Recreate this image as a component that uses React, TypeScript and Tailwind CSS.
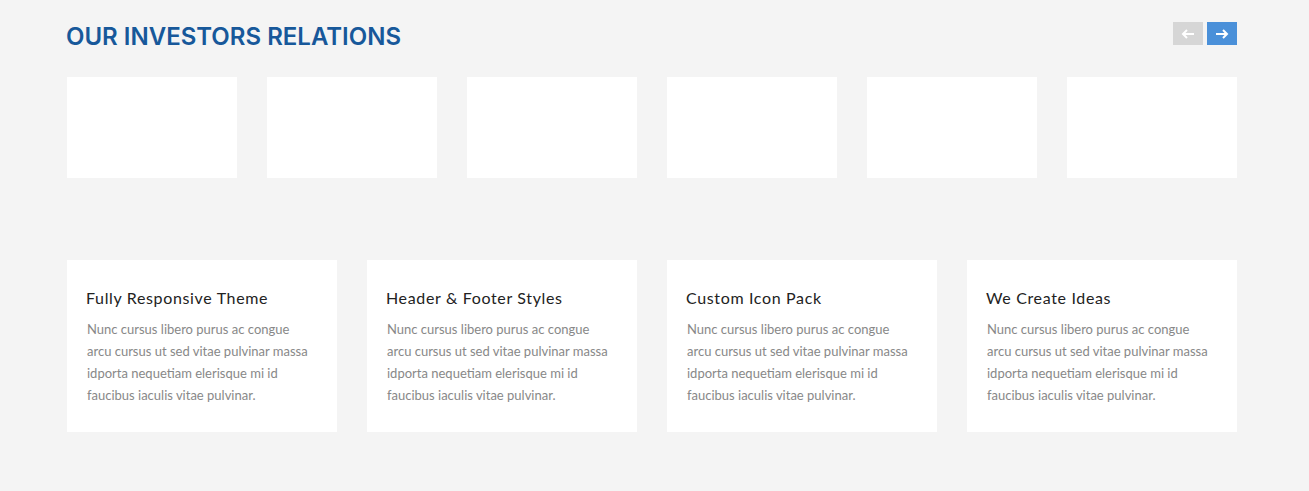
import React from "react";

const cards = [
  "Fully Responsive Theme",
  "Header & Footer Styles",
  "Custom Icon Pack",
  "We Create Ideas",
];

export default function App() {
  return (
    <div className="min-h-[491px] w-full bg-[#f4f4f4]" style={{ fontFamily: "Lato, 'Liberation Sans', sans-serif" }}>
      <div className="ml-[67px] w-[1170px] pt-[22px]">
        <div className="flex items-start justify-between">
          <h2
            className="-ml-[1px] text-[24px] font-semibold leading-[30px] tracking-[0px] text-[#17589a]"
            style={{ fontFamily: "Inter, 'Liberation Sans', sans-serif" }}
          >
            OUR INVESTORS RELATIONS
          </h2>
          <div className="flex gap-[4px]">
            <button className="flex h-[23px] w-[30px] items-center justify-center bg-[#d6d6d6]">
              <svg width="14" height="10" viewBox="0 0 14 10" fill="none" stroke="white" strokeWidth="2">
                <path d="M13 5H2M6 1L2 5l4 4" />
              </svg>
            </button>
            <button className="flex h-[23px] w-[30px] items-center justify-center bg-[#4a90d9]">
              <svg width="14" height="10" viewBox="0 0 14 10" fill="none" stroke="white" strokeWidth="2">
                <path d="M1 5h11M8 1l4 4-4 4" />
              </svg>
            </button>
          </div>
        </div>
        <div className="mt-[25px] grid grid-cols-6 gap-[30px]">
          {Array.from({ length: 6 }).map((_, i) => (
            <div key={i} className="h-[101px] bg-white" />
          ))}
        </div>
        <div className="mt-[82px] grid grid-cols-4 gap-[30px]">
          {cards.map((t) => (
            <div key={t} className="h-[172px] bg-white px-[20px] pt-[27px]">
              <h3 className="-ml-[1px] text-[16px] leading-[22px] tracking-[0.65px] text-[#222]">{t}</h3>
              <p className="mt-[9px] text-[13px] leading-[22px] text-[#888]">
                Nunc cursus libero purus ac congue arcu cursus ut sed vitae pulvinar massa idporta nequetiam elerisque mi id faucibus iaculis vitae pulvinar.
              </p>
            </div>
          ))}
        </div>
      </div>
    </div>
  );
}
